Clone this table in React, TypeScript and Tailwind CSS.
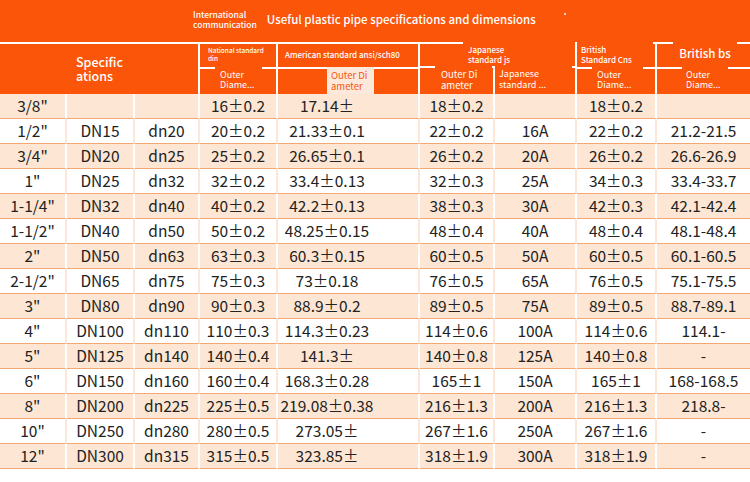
const rows: string[][] = [
  ['3/8"', "", "", "16±0.2", "17.14±", "18±0.2", "", "18±0.2", ""],
  ['1/2"', "DN15", "dn20", "20±0.2", "21.33±0.1", "22±0.2", "16A", "22±0.2", "21.2-21.5"],
  ['3/4"', "DN20", "dn25", "25±0.2", "26.65±0.1", "26±0.2", "20A", "26±0.2", "26.6-26.9"],
  ['1"', "DN25", "dn32", "32±0.2", "33.4±0.13", "32±0.3", "25A", "34±0.3", "33.4-33.7"],
  ['1-1/4"', "DN32", "dn40", "40±0.2", "42.2±0.13", "38±0.3", "30A", "42±0.3", "42.1-42.4"],
  ['1-1/2"', "DN40", "dn50", "50±0.2", "48.25±0.15", "48±0.4", "40A", "48±0.4", "48.1-48.4"],
  ['2"', "DN50", "dn63", "63±0.3", "60.3±0.15", "60±0.5", "50A", "60±0.5", "60.1-60.5"],
  ['2-1/2"', "DN65", "dn75", "75±0.3", "73±0.18", "76±0.5", "65A", "76±0.5", "75.1-75.5"],
  ['3"', "DN80", "dn90", "90±0.3", "88.9±0.2", "89±0.5", "75A", "89±0.5", "88.7-89.1"],
  ['4"', "DN100", "dn110", "110±0.3", "114.3±0.23", "114±0.6", "100A", "114±0.6", "114.1-"],
  ['5"', "DN125", "dn140", "140±0.4", "141.3±", "140±0.8", "125A", "140±0.8", "-"],
  ['6"', "DN150", "dn160", "160±0.4", "168.3±0.28", "165±1", "150A", "165±1", "168-168.5"],
  ['8"', "DN200", "dn225", "225±0.5", "219.08±0.38", "216±1.3", "200A", "216±1.3", "218.8-"],
  ['10"', "DN250", "dn280", "280±0.5", "273.05±", "267±1.6", "250A", "267±1.6", "-"],
  ['12"', "DN300", "dn315", "315±0.5", "323.85±", "318±1.9", "300A", "318±1.9", "-"],
];

function TwoLine({ a, b }: { a: string; b: string }) {
  return (
    <>
      <span className="block">{a}</span>
      <span className="block">{b}</span>
    </>
  );
}

export default function App() {
  return (
    <div className="w-[750px] h-[482px] bg-white overflow-hidden font-['Noto_Sans_CJK_SC',sans-serif]">
      {/* title band */}
      <div className="h-[42px] bg-[#fa5508] flex items-start pl-[193px] pt-[10px] gap-[10px] text-white">
        <div className="text-[8.5px] leading-[9.5px] font-medium">
          <TwoLine a="International" b="communication" />
        </div>
        <div className="text-[11.5px] leading-[15px] font-medium pt-[2px]">
          Useful plastic pipe specifications and dimensions
        </div>
        <div className="w-[2px] h-[2px] bg-white rounded-full mt-[3px] ml-[18px]" />
      </div>

      {/* column headers */}
      <div className="h-[52px] bg-[#fa5508] border-t-2 border-white flex text-white">
        <div className="w-[200px] border-r-2 border-white flex items-center pl-[76px]">
          <div className="text-[12.5px] leading-[14px] font-medium">
            <TwoLine a="Specific" b="ations" />
          </div>
        </div>

        <div className="w-[78px] border-r-2 border-white flex flex-col">
          <div className="h-[25px] border-b-2 border-white pl-[8px] pt-[3px] text-[6.5px] leading-[7.5px] font-medium">
            <TwoLine a="National standard" b="din" />
          </div>
          <div className="-mt-[2px] ml-[15px] w-[47px] h-[28px] bg-[#fa5508] pl-[5px] pt-[3px] text-[9px] leading-[10.5px]">
            <TwoLine a="Outer" b="Diame..." />
          </div>
        </div>

        <div className="w-[142px] border-r-2 border-white flex flex-col">
          <div className="h-[25px] border-b-2 border-white flex items-center pl-[7px] text-[8px] font-medium">
            American standard ansi/sch80
          </div>
          <div className="-mt-[2px] ml-[49px] w-[47px] h-[28px] bg-[#fde9dc] text-[#fa5508] pl-[4px] pt-[3px] text-[9.5px] leading-[11px]">
            <TwoLine a="Outer Di" b="ameter" />
          </div>
        </div>

        <div className="w-[157px] border-r-2 border-white flex flex-col">
          <div className="h-[25px] border-b-2 border-white">
            <div className="-mt-[2px] ml-[43px] w-[112px] h-[24px] bg-[#fa5508] pl-[5px] pt-[3px] text-[8px] leading-[9.5px] font-medium">
              <TwoLine a="Japanese" b="standard js" />
            </div>
          </div>
          <div className="flex flex-1">
            <div className="w-[75px] border-r-2 border-white">
              <div className="-mt-[2px] ml-[15px] w-[57px] h-[28px] bg-[#fa5508] pl-[6px] pt-[3px] text-[9.5px] leading-[11px]">
                <TwoLine a="Outer Di" b="ameter" />
              </div>
            </div>
            <div className="flex-1">
              <div className="-mt-[2px] w-[77px] h-[28px] bg-[#fa5508] pl-[4px] pt-[3px] text-[9px] leading-[10.5px]">
                <TwoLine a="Japanese" b="standard ..." />
              </div>
            </div>
          </div>
        </div>

        <div className="w-[80px] border-r-2 border-white flex flex-col">
          <div className="h-[25px] border-b-2 border-white">
            <div className="-mt-[2px] w-[76px] h-[24px] bg-[#fa5508] pl-[4px] pt-[3px] text-[8px] leading-[9.5px] font-medium">
              <TwoLine a="British" b="Standard Cns" />
            </div>
          </div>
          <div className="-mt-[2px] ml-[15px] w-[51px] h-[28px] bg-[#fa5508] pl-[5px] pt-[3px] text-[9px] leading-[10.5px]">
            <TwoLine a="Outer" b="Diame..." />
          </div>
        </div>

        <div className="w-[93px] flex flex-col">
          <div className="h-[25px] border-b-2 border-white">
            <div className="-mt-[2px] ml-[16px] w-[64px] h-[24px] bg-[#fa5508] flex items-center justify-center text-[11.5px] font-medium">
              British bs
            </div>
          </div>
          <div className="-mt-[2px] ml-[25px] w-[46px] h-[28px] bg-[#fa5508] pl-[4px] pt-[3px] text-[9px] leading-[10.5px]">
            <TwoLine a="Outer" b="Diame..." />
          </div>
        </div>
      </div>

      {/* body */}
      <div className="grid grid-cols-[67px_68px_65px_78px_142px_75px_82px_80px_93px] text-[15.5px] text-[#222]">
        {rows.map((r, i) =>
          r.map((cell, j) => (
            <div
              key={`${i}-${j}`}
              className={`h-[25px] flex items-center justify-center border-b-[1.5px] border-b-[#f3a874] leading-none ${
                i % 2 === 0 ? "bg-[#fde6d4]" : "bg-white"
              } ${j < 8 ? (i % 2 === 0 ? "border-r-2 border-r-white" : "border-r-2 border-r-[#fbe6d8]") : ""} ${
                j === 4 ? "pr-[42px]" : ""
              }`}
            >
              {cell}
            </div>
          )),
        )}
      </div>
    </div>
  );
}
